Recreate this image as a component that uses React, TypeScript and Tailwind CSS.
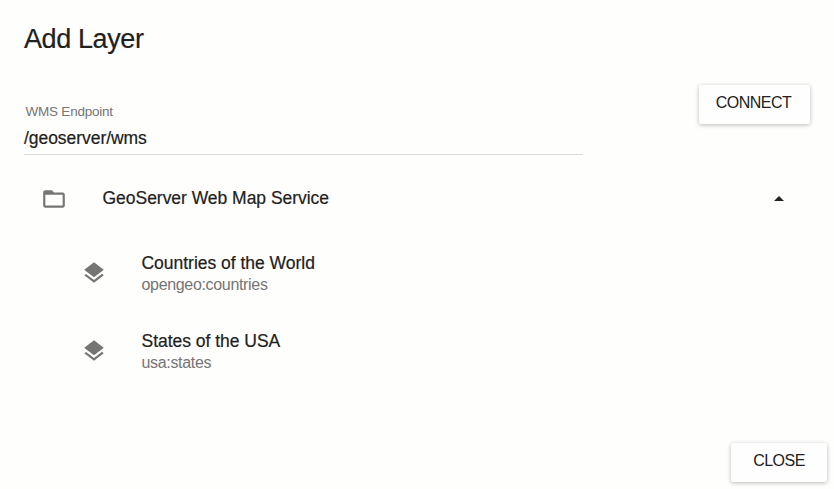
const font = "font-['Liberation_Sans',Arial,sans-serif]";
const strong = "[-webkit-text-stroke:0.2px_#212121]";

function Layer({ title, name }: { title: string; name: string }) {
  return (
    <li className="flex h-[78px] items-start pl-[81px]">
      <svg className="mt-2 size-[26px] shrink-0 fill-[#757575]" viewBox="0 0 24 24">
        <path d="M11.99 18.54l-7.37-5.73L3 14.07l9 7 9-7-1.63-1.27-7.38 5.74zM12 16l7.36-5.73L21 9l-9-7-9 7 1.63 1.27L12 16z" />
      </svg>
      <div className="ml-[34.5px]">
        <div className={`${strong} text-[17.5px] leading-[22px] tracking-[-0.02px] text-[#212121]`}>{title}</div>
        <div className="text-[16px] leading-[22px] tracking-[-0.33px] text-[#757575]">{name}</div>
      </div>
    </li>
  );
}

export default function App() {
  return (
    <main className={`${font} flex h-[489px] w-[834px] flex-col overflow-hidden bg-[#fefefc] text-[#212121]`}>
      <h1 className={`${strong} mt-6 ml-6 h-[60px] text-[27px] leading-[30px] tracking-[-0.4px]`}>Add Layer</h1>
      <div className="flex h-[71px] justify-between pr-6 pl-6">
        <label className="flex w-[559px] flex-col border-b border-[#dcdcdc] pt-[19px]">
          <span className="pl-[1.5px] text-[13.5px] leading-[18px] tracking-[-0.22px] text-[#757575]">WMS Endpoint</span>
          <span className={`${strong} mt-[6px] text-[17.5px] leading-[22px] tracking-[-0.05px]`}>/geoserver/wms</span>
        </label>
        <button className="mt-px h-[39px] w-[111px] rounded-[2px] bg-[#fefefe] pr-0.5 pb-[3px] text-[16px] tracking-[-0.5px] shadow-[0_1px_4px_rgba(0,0,0,0.28)]">CONNECT</button>
      </div>
      <div className="flex h-[88px] items-center pl-[41px]">
        <svg className="size-[26px] fill-[#757575]" viewBox="0 0 24 24">
          <path d="M20 6h-8l-2-2H4c-1.1 0-1.99.9-1.99 2L2 18c0 1.1.9 2 2 2h16c1.1 0 2-.9 2-2V8c0-1.1-.9-2-2-2zm0 12H4V8h16v10z" />
        </svg>
        <span className={`${strong} ml-[35.5px] pb-0.5 text-[17.5px] tracking-[-0.03px]`}>GeoServer Web Map Service</span>
        <svg className="mr-[43px] ml-auto size-6 fill-[#212121]" viewBox="0 0 24 24"><path d="M7 14l5-5 5 5z" /></svg>
      </div>
      <ul className="pt-[9px]">
        <Layer title="Countries of the World" name="opengeo:countries" />
        <Layer title="States of the USA" name="usa:states" />
      </ul>
      <div className="mt-auto flex h-[46px] justify-end pr-[7px]">
        <button className="h-[39px] w-24 rounded-[2px] bg-[#fefefe] pb-[3px] text-[16px] tracking-[-0.5px] shadow-[0_1px_4px_rgba(0,0,0,0.28)]">CLOSE</button>
      </div>
    </main>
  );
}
